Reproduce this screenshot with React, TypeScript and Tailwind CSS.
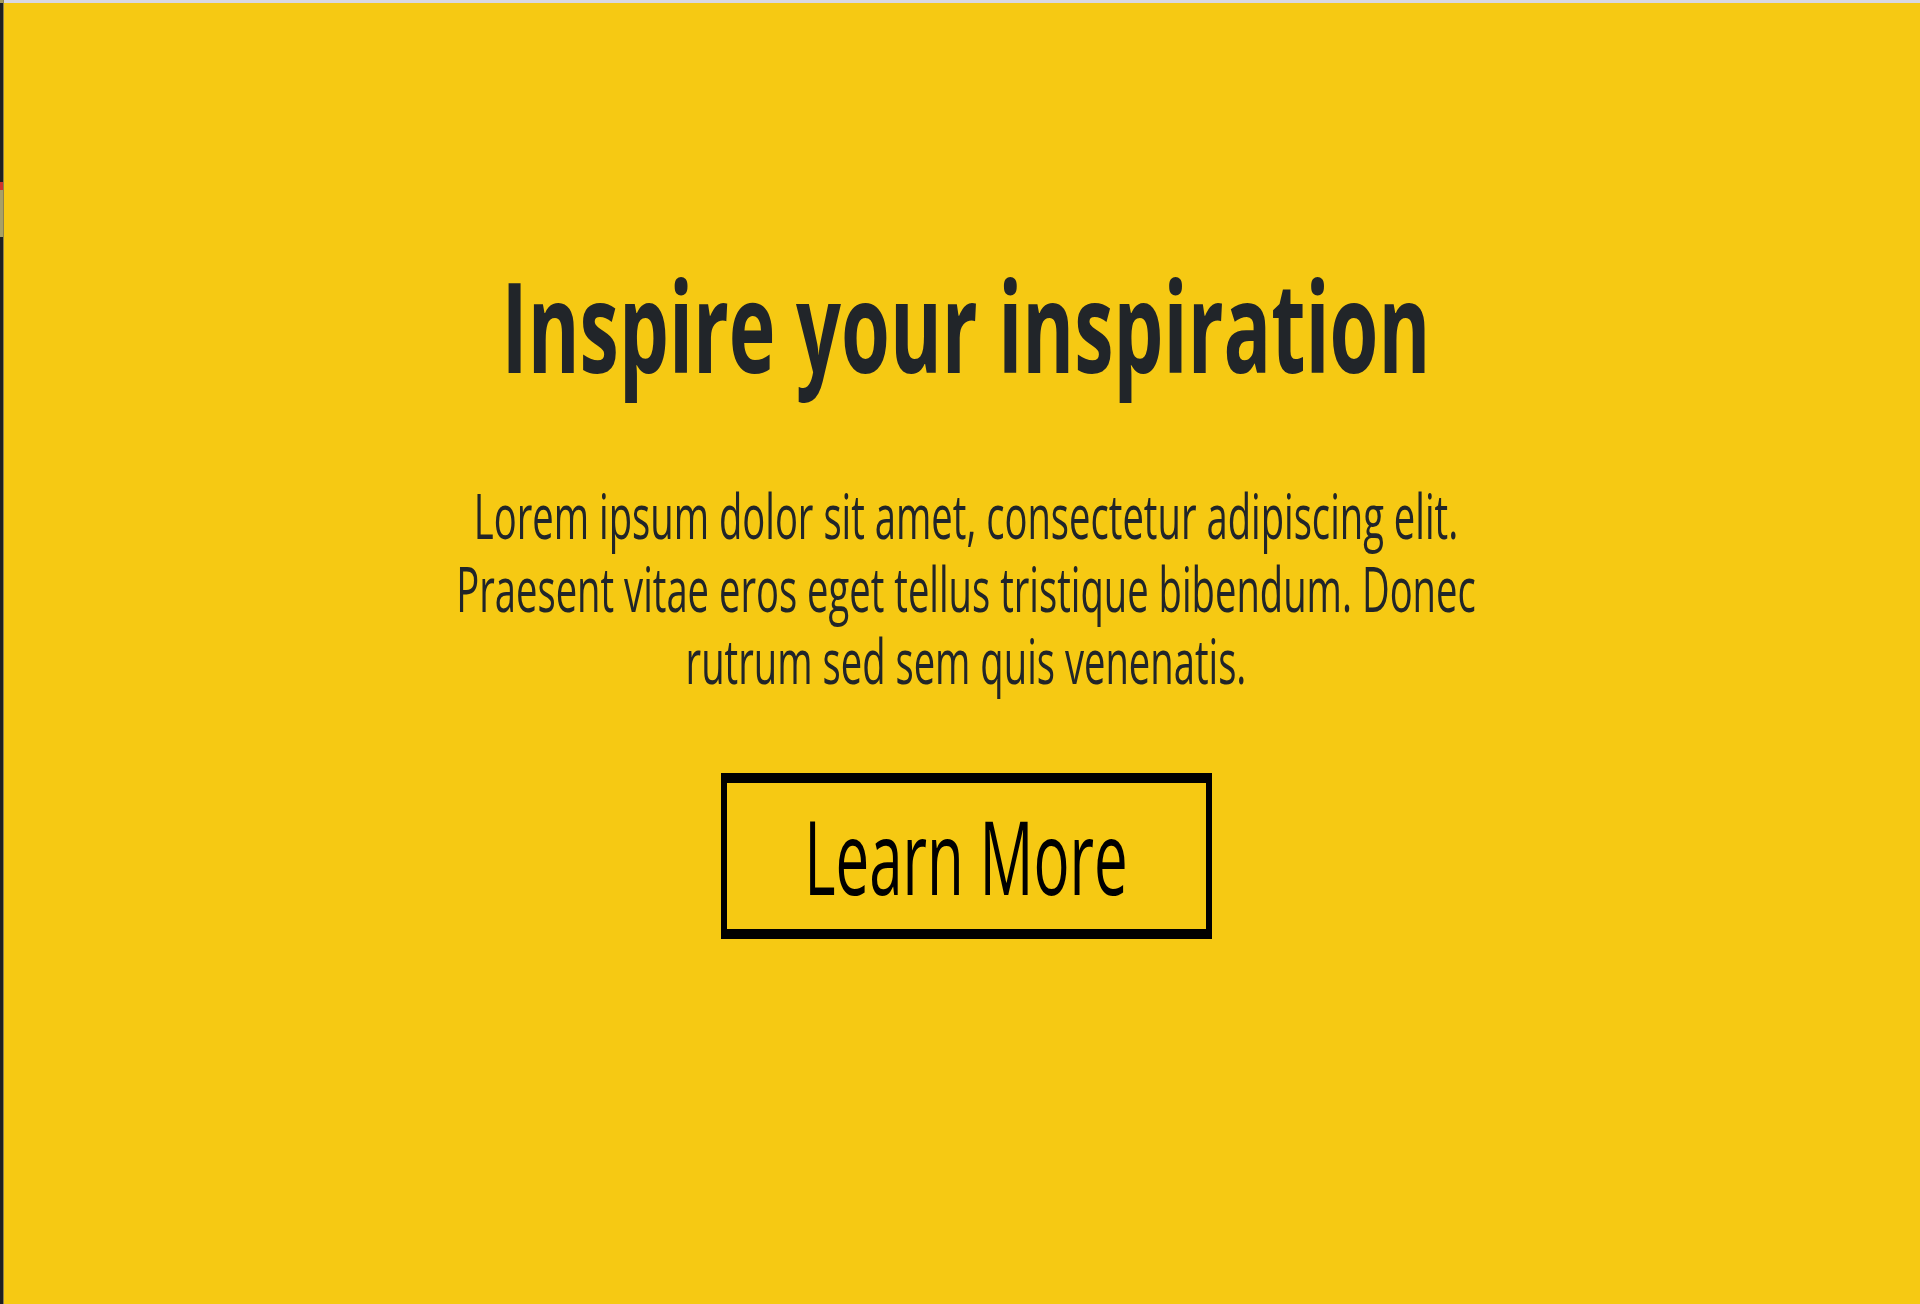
const font = "font-['Open_Sans','Noto_Sans',sans-serif]";

export default function App() {
  return (
    <div className={`flex h-[1304px] w-full overflow-hidden bg-[#f6c913] ${font}`}>
      {/* left window edge */}
      <div className="flex w-[4px] shrink-0 flex-col border-r border-[#8c8250] bg-[#1e1f21]">
        <div className="h-[3px] bg-[#a59a5a]" />
        <div className="mt-[179px] h-[8px] bg-[#d0342c]" />
        <div className="h-[47px] bg-[#a8a064]" />
      </div>

      <div className="flex flex-1 flex-col">
        {/* top edge */}
        <div className="h-[3px] bg-[#d9d8e2]" />

        {/* hero */}
        <section className="flex flex-1 flex-col items-center pl-[8px] pt-[282px] text-[#212529]">
          <h1 className="scale-y-[1.59] text-[79px] font-bold leading-none tracking-normal whitespace-nowrap">
            Inspire your inspiration
          </h1>

          <p className="mt-[157px] max-w-[1060px] scale-y-[1.62] text-center text-[38.2px] leading-[44.6px]">
            Lorem ipsum dolor sit amet, consectetur adipiscing elit. Praesent vitae eros eget tellus tristique
            bibendum. Donec rutrum sed sem quis venenatis.
          </p>

          <a
            href="#"
            className="mt-[118px] flex h-[166px] w-[491px] items-center justify-center border-x-[6px] border-y-[10px] border-black text-black"
          >
            <span className="block scale-y-[1.7] text-[60px] leading-none">Learn More</span>
          </a>
        </section>
      </div>
    </div>
  );
}
